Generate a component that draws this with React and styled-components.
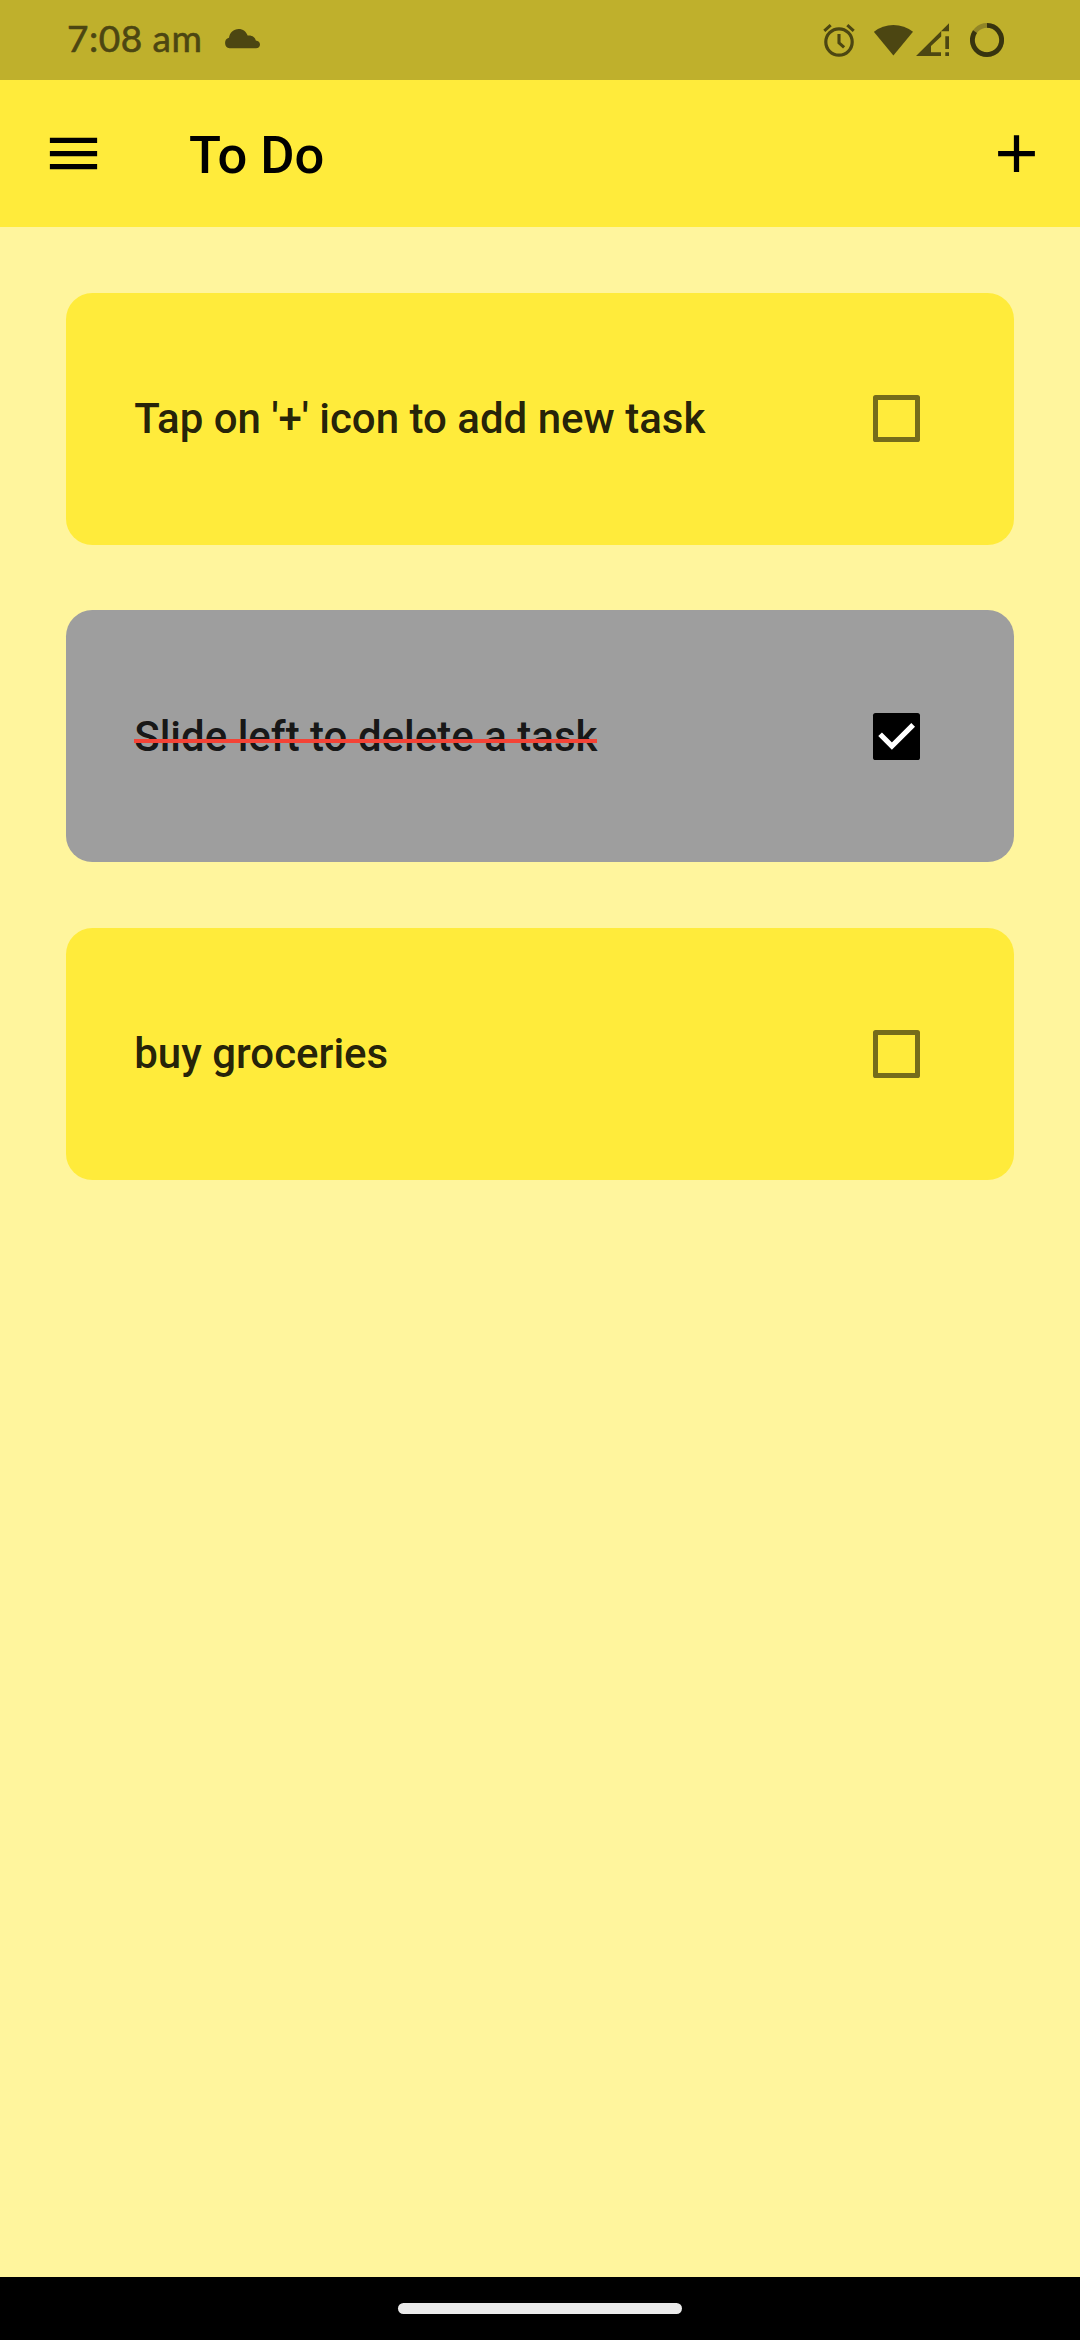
import React, { useState } from "react";
import styled, { createGlobalStyle } from "styled-components";

const GlobalStyle = createGlobalStyle`
  html, body, #root { margin: 0; padding: 0; height: 100%; }
  body { background: #fff59d; font-family: Roboto, "Liberation Sans", sans-serif; }
  *, *::before, *::after { box-sizing: border-box; }
`;

const Screen = styled.div`
  display: flex;
  flex-direction: column;
  width: 1080px;
  height: 2340px;
  background: #fff59d;
  overflow: hidden;
`;

const StatusBar = styled.header`
  display: flex;
  align-items: center;
  justify-content: space-between;
  flex: none;
  height: 80px;
  padding: 0 76px 0 67px;
  background: #bfb02c;
  color: #4c4612;
`;

const StatusGroup = styled.div`
  display: flex;
  align-items: center;
  height: 80px;
`;

const Clock = styled.span`
  width: 157px;
  padding-bottom: 4px;
  font-family: Lato, Roboto, sans-serif;
  font-size: 37px;
  line-height: 76px;
  letter-spacing: 0.5px;
  white-space: nowrap;
  -webkit-text-stroke: 0.6px currentColor;
`;

const StatusIcon = styled.svg`
  display: block;
  flex: none;
  height: 80px;
  width: ${(p) => p.$width}px;
  margin-right: ${(p) => p.$gap || 0}px;
  fill: currentColor;
`;

const AppBar = styled.nav`
  display: flex;
  align-items: center;
  flex: none;
  height: 147px;
  padding: 0 31.7px 0 42px;
  background: #ffeb3b;
  color: #000;
`;

const IconButton = styled.button`
  display: block;
  flex: none;
  width: 63px;
  height: 63px;
  padding: 0;
  border: 0;
  background: none;
  color: inherit;

  svg {
    display: block;
    width: 63px;
    height: 63px;
    fill: currentColor;
  }
`;

const Title = styled.h1`
  flex: 1;
  margin: 0;
  padding: 2px 0 0 84px;
  font-size: 52.5px;
  font-weight: 500;
  line-height: 62px;
`;

const TaskList = styled.main`
  display: flex;
  flex-direction: column;
  flex: 1;
  gap: 65.625px;
  padding: 65.625px;
`;

const TaskCard = styled.section`
  display: flex;
  align-items: center;
  justify-content: space-between;
  height: 252px;
  padding: 0 94.3px 0 68.6px;
  border-radius: 26.25px;
  background: ${(p) => (p.$done ? "#9e9e9e" : "#ffeb3b")};
`;

const TaskText = styled.span`
  position: relative;
  padding-top: 0.6px;
  color: rgba(0, 0, 0, 0.87);
  font-size: 42px;
  font-weight: 500;
  line-height: 50px;

  &::after {
    content: "";
    display: ${(p) => (p.$done ? "block" : "none")};
    position: absolute;
    left: 0;
    right: 0;
    top: 28px;
    height: 4px;
    background: #f44336;
  }
`;

const Checkbox = styled.button`
  flex: none;
  width: 47.25px;
  height: 47.25px;
  padding: 0;
  border: ${(p) => (p.$checked ? "0" : "5.25px solid rgba(0, 0, 0, 0.54)")};
  border-radius: 2.6px;
  background: ${(p) => (p.$checked ? "#000" : "transparent")};

  svg {
    display: block;
    width: 47.25px;
    height: 47.25px;
  }
`;

const GestureBar = styled.footer`
  display: flex;
  justify-content: center;
  flex: none;
  height: 63px;
  padding-top: 26px;
  background: #000;
`;

const GestureHandle = styled.div`
  width: 284px;
  height: 11px;
  border-radius: 6px;
  background: #ebebeb;
`;

const CloudIcon = () => (
  <StatusIcon $width={36} viewBox="224 0 36 80">
    <path d="M229.5 48.3A5.4 5.4 0 0 1 229 37.8C229.6 32.6 233.6 29 238.7 29C242.9 29 246.4 31.7 247.6 35.6C252 35 255.3 37.4 255.8 40.4C258.4 40.7 260 42.3 260 44.5C260 46.7 258.4 48.3 256 48.3Z" />
  </StatusIcon>
);

const AlarmIcon = () => (
  <StatusIcon $width={32} $gap={19.3} viewBox="822.5 0 32 80">
    <circle cx="838.5" cy="42" r="13.2" fill="none" stroke="currentColor" strokeWidth="3.2" />
    <path
      d="M823.8 30.8L830.2 25.2M853.2 30.8L846.8 25.2M838.5 34V42.8L843.6 47.4"
      fill="none"
      stroke="currentColor"
      strokeWidth="3.1"
    />
  </StatusIcon>
);

const WifiIcon = () => (
  <StatusIcon $width={39} $gap={3} viewBox="874 0 39 80">
    <path d="M893.4 55.5L873.8 31.8A31.5 31.5 0 0 1 913 31.8Z" />
  </StatusIcon>
);

const SignalIcon = () => (
  <StatusIcon $width={34} $gap={20} viewBox="916 0 34 80">
    <path d="M916 56L949 23.3V31.2H941.2V36.6L931 46V52.3H941V56Z" />
    <path d="M945.3 36.2H949V49H945.3ZM945.3 52.3H949V56H945.3Z" />
  </StatusIcon>
);

const BatteryRing = () => (
  <StatusIcon $width={34} viewBox="970 0 34 80">
    <circle cx="987" cy="40" r="14.6" fill="none" stroke="#918527" strokeWidth="4.8" />
    <path
      d="M987 25.4A14.6 14.6 0 1 1 975 31.7"
      fill="none"
      stroke="#38340f"
      strokeWidth="4.8"
    />
  </StatusIcon>
);

const initialTasks = [
  { name: "Tap on '+' icon to add new task", done: false },
  { name: "Slide left to delete a task", done: true },
  { name: "buy groceries", done: false },
];

function Task({ task, onToggle }) {
  return (
    <TaskCard $done={task.done}>
      <TaskText $done={task.done}>{task.name}</TaskText>
      <Checkbox
        role="checkbox"
        aria-checked={task.done}
        $checked={task.done}
        onClick={onToggle}
      >
        {task.done && (
          <svg viewBox="0 0 18 18">
            <path d="M2.7 8.1L7.2 12.6L15.3 4.5" fill="none" stroke="#fff" strokeWidth="2" />
          </svg>
        )}
      </Checkbox>
    </TaskCard>
  );
}

export default function App() {
  const [tasks, setTasks] = useState(initialTasks);
  const toggle = (index) =>
    setTasks(tasks.map((t, i) => (i === index ? { ...t, done: !t.done } : t)));

  return (
    <>
      <GlobalStyle />
      <Screen>
        <StatusBar>
          <StatusGroup>
            <Clock>7:08 am</Clock>
            <CloudIcon />
          </StatusGroup>
          <StatusGroup>
            <AlarmIcon />
            <WifiIcon />
            <SignalIcon />
            <BatteryRing />
          </StatusGroup>
        </StatusBar>
        <AppBar>
          <IconButton>
            <svg viewBox="0 0 24 24">
              <path d="M3 18h18v-2H3v2zm0-5h18v-2H3v2zm0-7v2h18V6H3z" />
            </svg>
          </IconButton>
          <Title>To Do</Title>
          <IconButton>
            <svg viewBox="0 0 24 24">
              <path d="M19 13h-6v6h-2v-6H5v-2h6V5h2v6h6v2z" />
            </svg>
          </IconButton>
        </AppBar>
        <TaskList>
          {tasks.map((task, i) => (
            <Task key={task.name} task={task} onToggle={() => toggle(i)} />
          ))}
        </TaskList>
        <GestureBar>
          <GestureHandle />
        </GestureBar>
      </Screen>
    </>
  );
}
